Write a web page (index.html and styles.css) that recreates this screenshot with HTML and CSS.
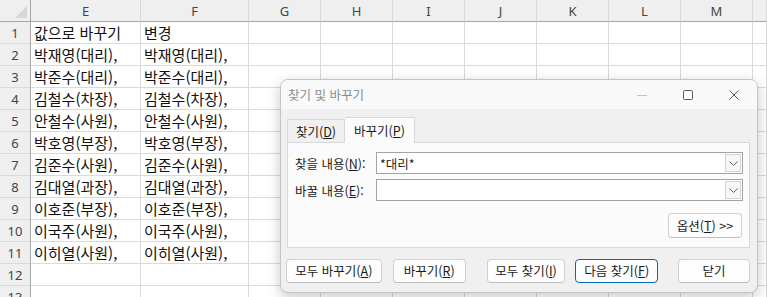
FILE: index.html
```html
<!DOCTYPE html>
<html lang="ko">
<head>
    <meta charset="UTF-8">
    <meta name="viewport" content="width=device-width, initial-scale=1.0">
    <title>찾기 및 바꾸기</title>
    <link rel="stylesheet" href="styles.css">
</head>
<body>
    <!-- 시트 영역 -->
    <div class="sheet">
        <div class="corner"><svg width="12" height="12" viewBox="0 0 12 12"><polygon points="12,0 12,12 0,12" fill="#d6d6d6"/></svg></div>
        <div class="ch">E</div><div class="ch">F</div><div class="ch">G</div><div class="ch">H</div><div class="ch">I</div><div class="ch">J</div><div class="ch">K</div><div class="ch">L</div><div class="ch">M</div><div class="ch"></div>

        <div class="rh">1</div><div class="c">값으로 바꾸기</div><div class="c">변경</div><div></div><div></div><div></div><div></div><div></div><div></div><div></div><div></div>
        <div class="rh">2</div><div class="c">박재영(대리),</div><div class="c">박재영(대리),</div><div></div><div></div><div></div><div></div><div></div><div></div><div></div><div></div>
        <div class="rh">3</div><div class="c">박준수(대리),</div><div class="c">박준수(대리),</div><div></div><div></div><div></div><div></div><div></div><div></div><div></div><div></div>
        <div class="rh">4</div><div class="c">김철수(차장),</div><div class="c">김철수(차장),</div><div></div><div></div><div></div><div></div><div></div><div></div><div></div><div></div>
        <div class="rh">5</div><div class="c">안철수(사원),</div><div class="c">안철수(사원),</div><div></div><div></div><div></div><div></div><div></div><div></div><div></div><div></div>
        <div class="rh">6</div><div class="c">박호영(부장),</div><div class="c">박호영(부장),</div><div></div><div></div><div></div><div></div><div></div><div></div><div></div><div></div>
        <div class="rh">7</div><div class="c">김준수(사원),</div><div class="c">김준수(사원),</div><div></div><div></div><div></div><div></div><div></div><div></div><div></div><div></div>
        <div class="rh">8</div><div class="c">김대열(과장),</div><div class="c">김대열(과장),</div><div></div><div></div><div></div><div></div><div></div><div></div><div></div><div></div>
        <div class="rh">9</div><div class="c">이호준(부장),</div><div class="c">이호준(부장),</div><div></div><div></div><div></div><div></div><div></div><div></div><div></div><div></div>
        <div class="rh">10</div><div class="c">이국주(사원),</div><div class="c">이국주(사원),</div><div></div><div></div><div></div><div></div><div></div><div></div><div></div><div></div>
        <div class="rh">11</div><div class="c">이히열(사원),</div><div class="c">이히열(사원),</div><div></div><div></div><div></div><div></div><div></div><div></div><div></div><div></div>
        <div class="rh">12</div><div></div><div></div><div></div><div></div><div></div><div></div><div></div><div></div><div></div><div></div>
        <div class="rh">13</div><div></div><div></div><div></div><div></div><div></div><div></div><div></div><div></div><div></div><div></div>
    </div>

    <!-- 찾기 및 바꾸기 대화상자 -->
    <div class="dialog">
        <div class="titlebar">
            <span class="title">찾기 및 바꾸기</span>
            <div class="win-btns">
                <span class="win-btn"><svg width="10" height="10" viewBox="0 0 10 10"><line x1="0" y1="5.5" x2="10" y2="5.5" stroke="#c4c4c4" stroke-width="1"/></svg></span>
                <span class="win-btn"><svg width="10" height="10" viewBox="0 0 10 10"><rect x="0.5" y="0.5" width="9" height="9" rx="1" fill="none" stroke="#5a5a5a" stroke-width="1"/></svg></span>
                <span class="win-btn"><svg width="10" height="10" viewBox="0 0 10 10"><path d="M0.5 0.5 L9.5 9.5 M9.5 0.5 L0.5 9.5" stroke="#5a5a5a" stroke-width="1"/></svg></span>
            </div>
        </div>
        <div class="dlg-body">
            <div class="tabs">
                <div class="tab">찾기(<u>D</u>)</div>
                <div class="tab active">바꾸기(<u>P</u>)</div>
            </div>
            <div class="panel">
                <div class="field">
                    <label>찾을 내용(<u>N</u>):</label>
                    <div class="combo">
                        <span class="combo-text">*대리*</span>
                        <span class="drop"><svg width="9" height="5" viewBox="0 0 9 5"><path d="M0.5 0.5 L4.5 4.5 L8.5 0.5" fill="none" stroke="#606060" stroke-width="1"/></svg></span>
                    </div>
                </div>
                <div class="field">
                    <label>바꿀 내용(<u>E</u>):</label>
                    <div class="combo">
                        <span class="combo-text"></span>
                        <span class="drop"><svg width="9" height="5" viewBox="0 0 9 5"><path d="M0.5 0.5 L4.5 4.5 L8.5 0.5" fill="none" stroke="#606060" stroke-width="1"/></svg></span>
                    </div>
                </div>
                <div class="opt-row">
                    <button class="btn btn-opt">옵션(<u>T</u>) &gt;&gt;</button>
                </div>
            </div>
            <div class="actions">
                <button class="btn w-all-rep">모두 바꾸기(<u>A</u>)</button>
                <button class="btn w-rep">바꾸기(<u>R</u>)</button>
                <button class="btn w-all-find">모두 찾기(<u>I</u>)</button>
                <button class="btn btn-default w-next">다음 찾기(<u>F</u>)</button>
                <button class="btn w-close">닫기</button>
            </div>
        </div>
    </div>
</body>
</html>
```

FILE: styles.css
```css
body {
    margin: 0;
    font-family: "Noto Sans", "Noto Sans CJK KR", sans-serif;
    background: #fff;
    overflow: hidden;
}
.sheet {
    display: grid;
    grid-template-columns: 31px 110px 108px repeat(7, 72px) 1fr;
    grid-auto-rows: 22px;
}
.sheet > div {
    box-sizing: border-box;
    border-right: 1px solid #dadada;
    border-bottom: 1px solid #dadada;
}
.sheet .corner {
    background: #efefef;
    border-right: 1px solid #a6a6a6;
    border-bottom: 1px solid #a6a6a6;
    display: flex;
    align-items: flex-end;
    justify-content: flex-end;
    padding: 0 3px 3px 0;
}
.sheet .ch {
    background: #efefef;
    border-bottom: 1px solid #a6a6a6;
    color: #444;
    font-size: 13px;
    line-height: 22px;
    text-align: center;
}
.sheet .rh {
    background: #efefef;
    border-right: 1px solid #a6a6a6;
    color: #444;
    font-size: 13px;
    line-height: 23px;
    text-align: center;
}
.sheet .c {
    font-family: "Noto Sans CJK KR", sans-serif;
    font-size: 15px;
    line-height: 22px;
    padding-left: 3px;
    color: #111;
    white-space: nowrap;
}

.dialog {
    position: absolute;
    left: 280px;
    top: 79px;
    width: 478px;
    box-sizing: border-box;
    background: #f0f0f0;
    border: 1px solid #c4c4c4;
    border-radius: 8px;
    box-shadow: 0 4px 14px rgba(0, 0, 0, 0.22);
    font-family: "Noto Sans CJK KR", sans-serif;
    font-size: 12px;
    color: #1b1b1b;
    overflow: hidden;
}
.titlebar {
    height: 29px;
    background: #f9f9f9;
    display: flex;
    align-items: center;
    padding-left: 7px;
}
.title {
    color: #8c8c8c;
    flex: 1;
    font-size: 12.5px;
}
.win-btns {
    display: flex;
    height: 100%;
}
.win-btn {
    width: 46px;
    display: flex;
    align-items: center;
    justify-content: center;
}
.dlg-body {
    padding: 8px 7px 9px 6px;
}
.tabs {
    display: flex;
    align-items: flex-end;
    height: 25px;
}
.tab {
    height: 23px;
    line-height: 23px;
    padding: 0 8px;
    box-sizing: border-box;
    border: 1px solid #d9d9d9;
    border-bottom: none;
    background: #f0f0f0;
    font-size: 12.5px;
}
.tab.active {
    height: 26px;
    line-height: 25px;
    padding: 0 9px;
    background: #fbfbfb;
    border-left: none;
    margin-bottom: -1px;
    position: relative;
    z-index: 1;
}
.panel {
    border: 1px solid #d9d9d9;
    background: #fbfbfb;
    padding: 9px 6px 9px 7px;
}
.field {
    display: flex;
    align-items: center;
    height: 22px;
}
.field + .field {
    margin-top: 5px;
}
.field label {
    width: 81px;
    font-size: 12.5px;
}
.combo {
    flex: 1;
    height: 22px;
    box-sizing: border-box;
    border: 1px solid #a3a3a3;
    background: #fff;
    display: flex;
    align-items: center;
}
.combo-text {
    flex: 1;
    padding-left: 3px;
    font-size: 12.5px;
}
.drop {
    width: 16px;
    height: 18px;
    margin-right: 1px;
    box-sizing: border-box;
    border: 1px solid #d4d4d4;
    background: #f7f7f7;
    display: flex;
    align-items: center;
    justify-content: center;
}
.opt-row {
    display: flex;
    justify-content: flex-end;
    margin-top: 12px;
    padding-right: 1px;
}
.btn {
    font-family: "Noto Sans CJK KR", sans-serif;
    font-size: 12.5px;
    color: #1b1b1b;
    background: #fdfdfd;
    border: 1px solid #d0d0d0;
    border-bottom-color: #bdbdbd;
    border-radius: 4px;
    height: 24px;
    padding: 0;
    line-height: 20px;
}
.btn-opt {
    width: 74px;
    height: 25px;
}
.actions {
    display: flex;
    margin-top: 11px;
    margin-left: -1px;
}
.btn-default {
    border: 1px solid #0067c0;
}
.w-all-rep { width: 96px; }
.w-rep { width: 73px; margin-left: 11px; }
.w-all-find { width: 79px; margin-left: 21px; }
.w-next { width: 83px; margin-left: 10px; }
.w-close { width: 72px; margin-left: 20px; }
```
